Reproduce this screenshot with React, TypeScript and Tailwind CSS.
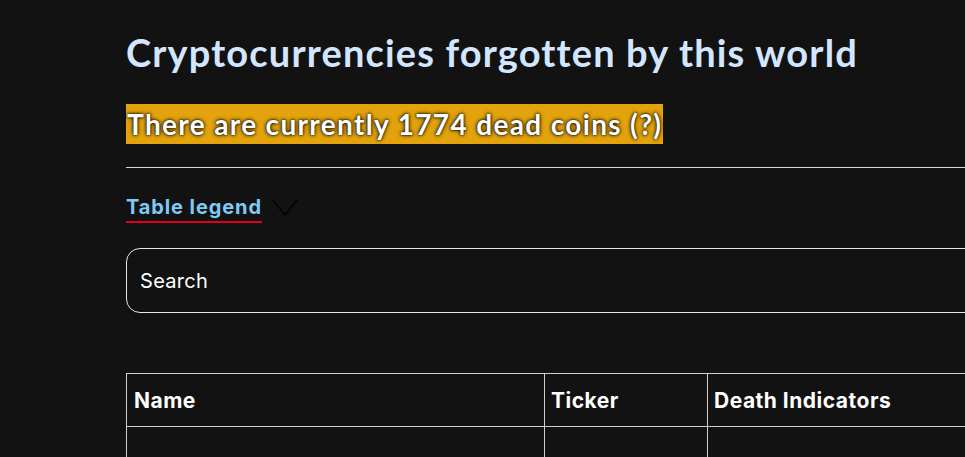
export default function App() {
  return (
    <div className="min-h-[457px] h-[457px] overflow-hidden bg-[#121212] text-white">
      <div className="w-[1100px] pl-[126px] pt-[27px]" style={{ fontFamily: 'Lato, "Noto Sans", sans-serif' }}>
        <h1 className="text-[38px] font-bold leading-[50px] tracking-[1.15px] text-[#d3e6ff]">Cryptocurrencies forgotten by this world</h1>

        <div className="mt-[28px]">
          <span className="bg-[#e3a30c] px-[1px] py-[3px] text-[28px] font-bold leading-[38px] tracking-[1.35px] text-white [text-shadow:0_0_4px_#000,0_0_2px_#000]">
            There are currently 1774 dead coins (?)
          </span>
        </div>

        <hr className="mt-[24px] border-t border-[#d8d8d8]" />

        <div className="mt-[24px] flex items-center gap-[10px]">
          <span
            className="text-[20px] font-bold tracking-[0.9px] text-[#7fcbf5] underline decoration-[#e0001b] decoration-2 underline-offset-[7px]"
            style={{ fontFamily: 'Inter, "Noto Sans", sans-serif' }}
          >
            Table legend
          </span>
          <svg width="26" height="18" viewBox="0 0 26 18" fill="none" className="mt-[1px]">
            <path d="M1 1 L13 16 L25 1" stroke="#000" strokeWidth="1.3" />
          </svg>
        </div>

        <div
          className="mt-[26px] flex h-[65px] w-[900px] items-center rounded-[14px] border border-[#e6e6e6] px-[13px] text-[20px] tracking-[0.3px] text-white"
          style={{ fontFamily: 'Inter, "Noto Sans", sans-serif' }}
        >
          Search
        </div>

        <table
          className="mt-[60px] w-[900px] border-collapse text-left"
          style={{ fontFamily: 'Inter, "Noto Sans", sans-serif' }}
        >
          <thead>
            <tr className="h-[53px]">
              <th className="w-[418px] border border-[#cfcfcf] px-[7px] pt-[1px] text-[21px] font-bold tracking-[0.5px]">Name</th>
              <th className="w-[163px] border border-[#cfcfcf] px-[6px] pt-[1px] text-[21px] font-bold tracking-[0.5px]">Ticker</th>
              <th className="border border-[#cfcfcf] px-[6px] pt-[1px] text-[21px] font-bold tracking-[0.5px]">Death Indicators</th>
            </tr>
          </thead>
          <tbody>
            <tr className="h-[60px]">
              <td className="border border-[#cfcfcf]"></td>
              <td className="border border-[#cfcfcf]"></td>
              <td className="border border-[#cfcfcf]"></td>
            </tr>
          </tbody>
        </table>
      </div>
    </div>
  );
}
